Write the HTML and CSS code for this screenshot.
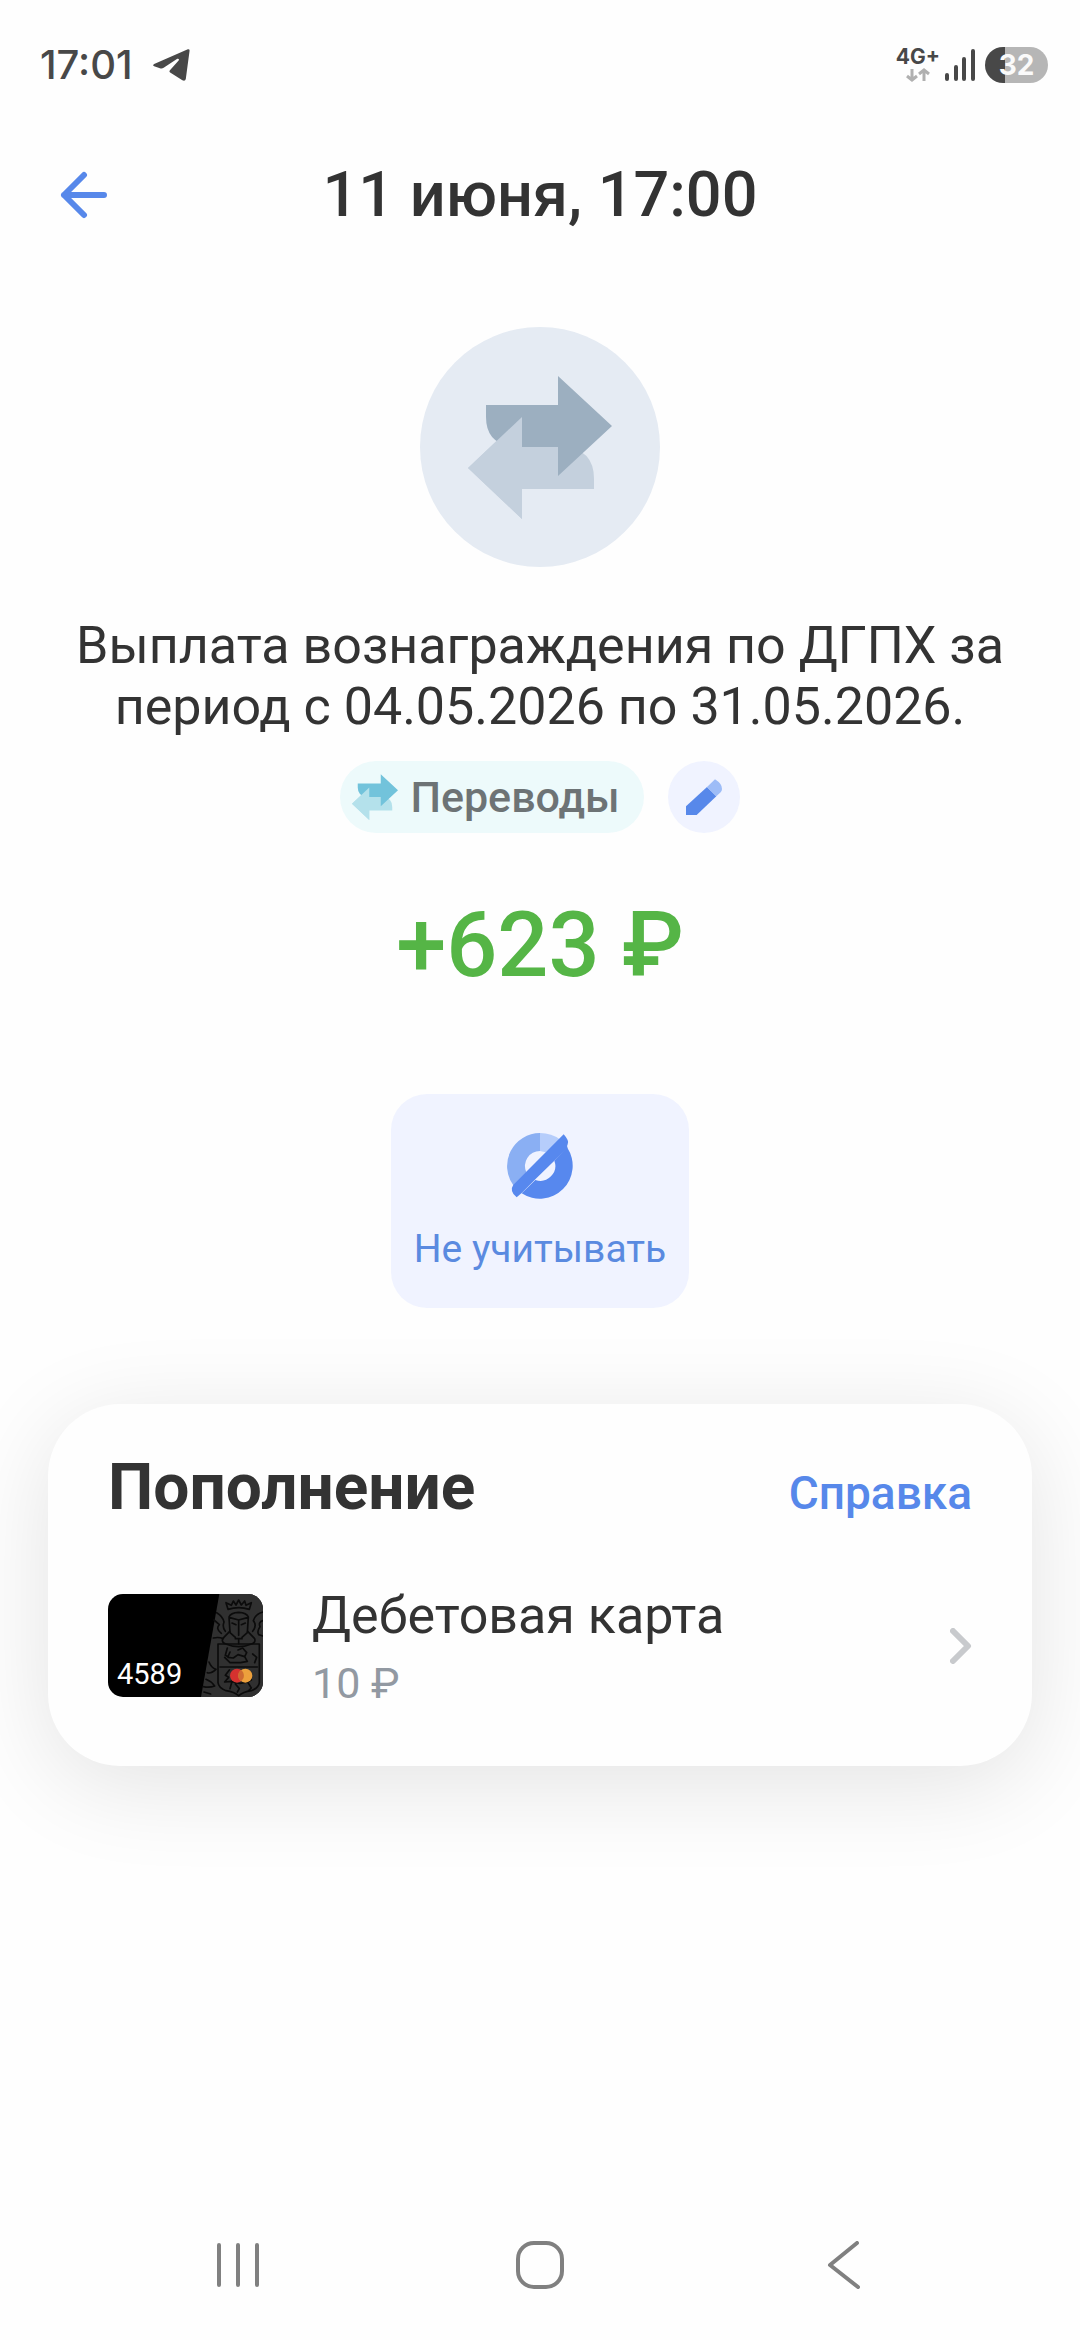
FILE: index.html
```
<!DOCTYPE html>
<html lang="ru">
<head>
<meta charset="utf-8">
<meta name="viewport" content="width=device-width, initial-scale=1">
<title>11 июня, 17:00</title>
<link rel="stylesheet" href="styles.css">
</head>
<body>
<svg class="sprite" aria-hidden="true">
  <symbol id="transfer" viewBox="48 48 144 144">
    <path class="transfer-back" d="M48 141L102 90V120H144Q174 122 174 152V162H102V192Z"/>
    <path class="transfer-front" d="M66 78H138V49L192 99L138 149V120H96Q66 118 66 90Z"/>
    <path class="transfer-back" d="M48 141L102 90V192Z"/>
  </symbol>
</svg>

<div class="status-bar">
  <div class="status-left">
    <time class="clock">17:01</time>
    <svg class="telegram" viewBox="0 0 108 94" aria-hidden="true"><path d="M102 1Q108 0 107 6L96 88Q94 96 86 92L50 69Q46 66 50 62L75 34Q78 28 71 29L31 55Q27 58 22 57L3 51Q-3 48 3 44Z"/></svg>
  </div>
  <div class="status-right">
    <div class="network">
      <span class="network-type">4G+</span>
      <svg class="traffic" viewBox="0 0 24 14" aria-hidden="true"><path d="M6 1V12M1 8L6 12L11 8M18 13V2M13 6L18 2L23 6"/></svg>
    </div>
    <svg class="signal" viewBox="0 0 30 34" aria-hidden="true"><path d="M2 27V31M11 19V31M19 11V31M28 3V31"/></svg>
    <div class="battery">32</div>
  </div>
</div>

<header class="header">
  <button class="back" aria-label="Назад">
    <svg viewBox="0 0 48 48" aria-hidden="true"><path d="M44 24H4M24 4L4 24L24 44"/></svg>
  </button>
  <h1 class="title">11 июня, 17:00</h1>
</header>

<main class="content">
  <div class="avatar"><svg class="avatar-icon" aria-hidden="true"><use href="#transfer"/></svg></div>
  <p class="description">Выплата вознаграждения по ДГПХ за период с 04.05.2026 по 31.05.2026.</p>
  <div class="category">
    <button class="chip"><svg class="chip-icon" aria-hidden="true"><use href="#transfer"/></svg>Переводы</button>
    <button class="edit" aria-label="Изменить категорию">
      <svg viewBox="0 0 216 216" aria-hidden="true"><path fill="#5788ea" d="M54 162V136L117 78L145 106L86 162Z"/><path fill="#9dbcf7" d="M117 78L141 55Q163 69 162 84Q162 89 158 94L145 106Z"/></svg>
    </button>
  </div>
  <p class="amount">+623 ₽</p>
  <button class="exclude">
    <svg class="exclude-icon" viewBox="0 0 198 198" aria-hidden="true">
      <path fill="#8aaff3" d="M99 0A99 99 0 0 0 19 157L58 118A45 45 0 0 1 99 54Z"/>
      <path fill="#b6cdfb" d="M99 0V54L116 58L160 20Q134 0 99 0Z"/>
      <path fill="#5788ee" d="M181 44A99 99 0 0 1 44 181L85 141A45 45 0 0 0 142 83Z"/>
      <path fill="#5788ee" d="M170 4Q188 24 182 34Q178 40 182 46L142 83L85 139L44 180L29 193Q6 174 19 155Z"/>
    </svg>
    Не учитывать
  </button>

  <section class="account">
    <div class="account-head">
      <h2 class="account-title">Пополнение</h2>
      <a class="account-link" href="#">Справка</a>
    </div>
    <a class="account-row" href="#">
      <span class="bank-card">
        <svg viewBox="0 0 465 309" aria-hidden="true">
          <path fill="#303030" d="M334 0H465V309H279Z"/>
          <g fill="none" stroke="#0b0b0b" stroke-width="5" stroke-linejoin="round" stroke-linecap="round">
            <path d="M360 46L354 26L370 34L376 21L384 33L392 18L400 33L410 21L414 34L430 26L424 46Q392 36 360 46Z"/>
            <path d="M363 69Q368 56 392 55Q416 56 421 69L418 116L402 130M363 69L366 116L382 130M363 70L392 78L421 70M392 78V124M372 87L384 92M412 87L400 92"/>
            <path d="M365 112L344 134Q340 146 354 150Q372 158 392 158Q412 158 430 150Q444 146 440 134L419 112M382 134H402M392 134V149"/>
            <path d="M330 150H454V266Q452 282 430 290Q405 294 392 305Q379 294 354 290Q332 282 330 266ZM336 219H448"/>
            <path d="M358 162L352 184L360 188L366 174M350 190L366 206H398L418 202L410 188L390 182L376 192L360 190M390 168L404 162L416 176L410 188M434 180L446 190L440 206"/>
            <path d="M364 228L352 244L362 250L350 264L372 262L366 284M382 270L394 284L388 294M420 266L430 282L422 290M370 262Q400 276 430 258"/>
            <path d="M326 56Q344 66 348 84Q342 100 352 112M318 78L334 92Q322 104 340 118M316 132Q332 128 346 134M465 54Q442 60 436 80Q448 94 434 112M465 80Q450 84 456 98Q446 112 452 122L465 126"/>
            <path d="M303 204Q310 222 324 226Q308 240 298 236M294 256Q310 262 320 276Q304 282 286 278M288 294L308 300"/>
          </g>
          <circle cx="387" cy="245" r="21" fill="#d5322f"/>
          <circle cx="412" cy="245" r="21" fill="#eca03c"/>
          <path fill="#cd6a31" d="M399 228A21 21 0 0 1 399 262A21 21 0 0 1 399 228Z"/>
        </svg>
        <span class="card-number">4589</span>
      </span>
      <span class="account-text">
        <span class="account-name">Дебетовая карта</span>
        <span class="account-balance">10 ₽</span>
      </span>
      <svg class="chevron" viewBox="0 0 22 36" aria-hidden="true"><path d="M3 3L18 18L3 33"/></svg>
    </a>
  </section>
</main>

<nav class="nav-bar">
  <button class="nav-button" aria-label="Недавние"><svg viewBox="0 0 48 48" aria-hidden="true"><path d="M5 4V44M24 4V44M43 4V44"/></svg></button>
  <button class="nav-button" aria-label="Домой"><svg viewBox="0 0 48 48" aria-hidden="true"><rect x="2" y="2" width="44" height="44" rx="16"/></svg></button>
  <button class="nav-button" aria-label="Назад"><svg viewBox="0 0 48 48" aria-hidden="true"><path d="M39 2L12 24L40 46"/></svg></button>
</nav>
</body>
</html>
```

FILE: styles.css
```
* {
  box-sizing: border-box;
}

body {
  display: flex;
  flex-direction: column;
  min-height: 100vh;
  margin: 0;
  overflow-x: hidden;
  background: #fefefe;
  color: #333;
  font-family: Roboto, "Noto Sans", sans-serif;
}

button {
  padding: 0;
  border: 0;
  background: none;
  color: inherit;
  font: inherit;
}

a {
  color: inherit;
  text-decoration: none;
}

h1,
h2,
p {
  margin: 0;
}

svg {
  display: block;
}

.sprite {
  position: absolute;
  width: 0;
  height: 0;
}

/* System status bar */
.status-bar {
  display: flex;
  align-items: center;
  justify-content: space-between;
  height: 130px;
  padding: 0 32px 0 40px;
  color: #484848;
  font-family: Inter, Roboto, sans-serif;
}

.status-left {
  display: flex;
  align-items: center;
  gap: 20px;
}

.clock {
  font-size: 40px;
  font-weight: 500;
  line-height: 48px;
}

.telegram {
  width: 37px;
  height: 32px;
  fill: #484848;
}

.status-right {
  display: flex;
  align-items: center;
}

.network {
  display: flex;
  flex-direction: column;
  align-items: center;
  gap: 2px;
  margin-right: 5px;
}

.network-type {
  font-size: 21px;
  font-weight: 700;
  line-height: 18px;
}

.traffic {
  width: 24px;
  height: 14px;
  fill: none;
  stroke: #b0b0b0;
  stroke-width: 3;
}

.signal {
  width: 30px;
  height: 34px;
  margin-right: 10px;
  fill: none;
  stroke: #484848;
  stroke-width: 4;
  stroke-linecap: round;
}

.battery {
  width: 63px;
  border-radius: 18px;
  background: linear-gradient(90deg, #484848 32%, #b6b6b6 32%);
  color: #fafafa;
  font-size: 28px;
  font-weight: 700;
  line-height: 36px;
  text-align: center;
}

/* Screen header */
.header {
  display: grid;
  grid-template-columns: 48px 1fr 48px;
  align-items: center;
  height: 130px;
  padding: 0 60px;
}

.back svg {
  width: 48px;
  height: 48px;
  fill: none;
  stroke: #5788ea;
  stroke-width: 6;
  stroke-linecap: round;
  stroke-linejoin: round;
}

.title {
  font-size: 63px;
  font-weight: 500;
  line-height: 72px;
  text-align: center;
}

/* Operation summary */
.content {
  display: flex;
  flex: 1;
  flex-direction: column;
  align-items: center;
  padding: 67px 48px 0;
}

.avatar {
  display: grid;
  place-items: center;
  width: 240px;
  height: 240px;
  border-radius: 50%;
  background: #e5ebf3;
}

.avatar-icon {
  --front: #9cafc0;
  --back: #c4d0dd;
  width: 144px;
  height: 144px;
}

.transfer-front {
  fill: var(--front);
}

.transfer-back {
  fill: var(--back);
}

.description {
  margin-top: 48px;
  padding: 0 24px;
  font-size: 52px;
  line-height: 61px;
  text-align: center;
}

.category {
  display: flex;
  gap: 24px;
  margin-top: 24px;
}

.chip {
  display: flex;
  align-items: center;
  gap: 12px;
  height: 72px;
  padding: 0 24px 0 12px;
  border-radius: 36px;
  background: #edfafb;
  color: #6d7375;
  font-size: 43px;
  font-weight: 500;
}

.chip-icon {
  --front: #72c3db;
  --back: #b4e1eb;
  width: 46px;
  height: 46px;
}

.edit {
  width: 72px;
  height: 72px;
  border-radius: 50%;
  background: #f0f3ff;
}

.amount {
  margin: 65px 0 100px;
  color: #55b546;
  font-size: 90px;
  font-weight: 500;
  line-height: 96px;
}

.exclude {
  display: flex;
  flex-direction: column;
  align-items: center;
  gap: 28px;
  padding: 39px 23px 36px;
  border-radius: 36px;
  background: #f0f3ff;
  color: #5a8ae0;
  font-size: 39px;
  line-height: 45px;
}

.exclude-icon {
  width: 66px;
  height: 66px;
}

/* Account card */
.account {
  align-self: stretch;
  margin-top: 96px;
  padding: 48px 60px 60px;
  border-radius: 72px;
  background: #fefefe;
  box-shadow: 0 18px 96px rgba(0, 0, 0, 0.11);
}

.account-head {
  display: flex;
  align-items: baseline;
  justify-content: space-between;
}

.account-title {
  font-size: 64px;
  font-weight: 700;
  line-height: 72px;
}

.account-link {
  color: #5788ea;
  font-size: 46px;
  font-weight: 500;
}

.account-row {
  display: flex;
  align-items: center;
  margin-top: 61px;
}

.bank-card {
  position: relative;
  width: 155px;
  height: 103px;
  overflow: hidden;
  border-radius: 15px;
  background: #000;
}

.card-number {
  position: absolute;
  bottom: 6px;
  left: 9px;
  color: #fff;
  font-size: 29px;
  line-height: 34px;
}

.account-text {
  display: flex;
  flex: 1;
  flex-direction: column;
  gap: 14px;
  margin-left: 49px;
}

.account-name {
  font-size: 52px;
  line-height: 61px;
}

.account-balance {
  color: #9299a2;
  font-size: 43px;
  line-height: 46px;
}

.chevron {
  width: 22px;
  height: 36px;
  fill: none;
  stroke: #c8cacd;
  stroke-width: 6;
  stroke-linecap: round;
  stroke-linejoin: round;
}

/* System navigation */
.nav-bar {
  display: grid;
  grid-template-columns: repeat(3, 1fr);
  height: 150px;
  padding: 0 87px;
}

.nav-button {
  display: grid;
  place-items: center;
}

.nav-button svg {
  width: 48px;
  height: 48px;
  fill: none;
  stroke: #808080;
  stroke-width: 4;
  stroke-linecap: round;
  stroke-linejoin: round;
}
```
